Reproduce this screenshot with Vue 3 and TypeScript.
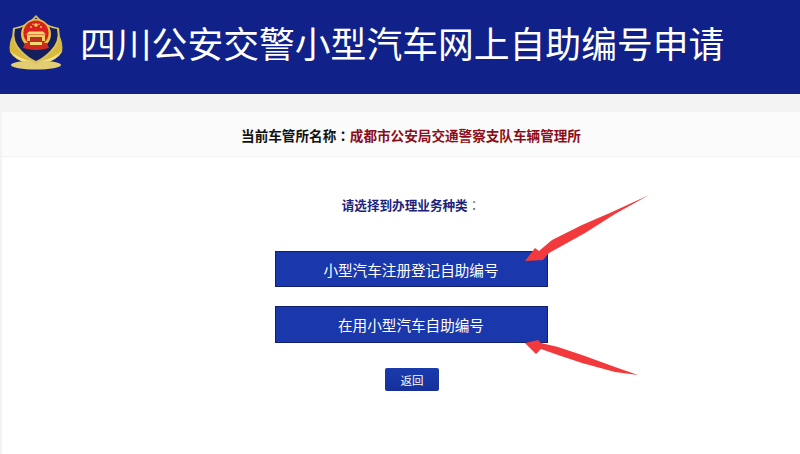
<script setup lang="ts">
const services: string[] = ['小型汽车注册登记自助编号', '在用小型汽车自助编号']
</script>

<template>
  <div class="page">
    <header class="banner">
      <svg class="emblem" viewBox="9 15 56 56" aria-hidden="true">
        <path d="M15 31 Q8 42 10 52 Q14 60 30 64 L36 66 L42 64 Q58 60 62 52 Q64 42 57 31 Q56 48 36 60 Q16 48 15 31Z" fill="#d9b93c"/>
        <path d="M10 51 Q18 58 31 61 L27 63 Q15 60 10 51Z M62 51 Q54 58 41 61 L45 63 Q57 60 62 51Z" fill="#f1e08a"/>
        <ellipse cx="36" cy="65" rx="25" ry="4.6" fill="#e3cd72"/>
        <path d="M13 28 Q27 26 36 15 Q45 26 59 28 Q62 42 52 52 Q44 60 36 64 Q28 60 20 52 Q10 42 13 28Z" fill="#d9c060"/>
        <path d="M15 29 Q28 27 36 17.5 Q44 27 57 29 Q60 41 50 51 Q43 58 36 61 Q29 58 22 51 Q12 41 15 29Z" fill="#141f5c"/>
        <circle cx="36" cy="34" r="15" fill="#e6c24a"/>
        <circle cx="36" cy="33" r="12.6" fill="#d8211f"/>
        <path d="M27 35 H45 V41 H27Z" fill="#efcf62"/>
        <path d="M26 34.5 H46 L43 31.5 H29Z" fill="#f3d971"/>
        <path d="M30 37 H42 V41 H30Z" fill="#b9301f"/>
        <path d="M25 43 H47 L49 48 Q36 52 23 48Z" fill="#cf2a22"/>
        <path d="M30 42 H42 V45 H30Z" fill="#f3d971"/>
        <circle cx="36" cy="25" r="1.8" fill="#f5d95b"/>
        <circle cx="31" cy="27" r="0.9" fill="#f5d95b"/>
        <circle cx="41" cy="27" r="0.9" fill="#f5d95b"/>
        <circle cx="33" cy="24.3" r="0.7" fill="#f5d95b"/>
        <circle cx="39" cy="24.3" r="0.7" fill="#f5d95b"/>
      </svg>
      <h1 class="title">四川公安交警小型汽车网上自助编号申请</h1>
    </header>
    <main class="panel">
      <div class="station"><b>当前车管所名称<span class="colon">：</span></b><b class="name">成都市公安局交通警察支队车辆管理所</b></div>
      <p class="prompt">请选择到办理业务种类<span class="colon light">：</span></p>
      <div class="actions">
        <button v-for="s in services" :key="s" class="service" type="button">{{ s }}</button>
        <button class="back" type="button">返回</button>
      </div>
      <svg class="arrows" viewBox="0 0 800 454" aria-hidden="true">
        <path d="M649 195 L612 212 L582 225 L552 240 L539 251 L535 248 L525 261 L543 260 L549 253 L558 248 L585 233 L615 214Z" fill="#f23a3d"/>
        <path d="M525 343 L538 340 L541 343 L558 347 L582 355 L615 367 L638 375 L615 372 L582 363 L558 355 L541 349 L536 354Z" fill="#f23a3d"/>
      </svg>
    </main>
  </div>
</template>

<style scoped>
.page {
  position: relative;
  width: 800px;
  height: 454px;
  overflow: hidden;
  background: #f3f3f3;
  font-family: "Liberation Sans", "Noto Sans CJK SC", sans-serif;
}
.banner {
  height: 94px;
  box-sizing: border-box;
  padding: 15px 0 0 9px;
  display: flex;
  align-items: flex-start;
  background: #10218a;
}
.emblem {
  width: 56px;
  height: 56px;
  flex: none;
}
.title {
  margin: 12px 0 0 15px;
  font-size: 35.8px;
  line-height: 38px;
  font-weight: 400;
  color: #fff;
  white-space: nowrap;
}
.panel {
  margin: 18px 0 0 2px;
  height: 342px;
  padding-left: 20px;
  background: #fff;
}
.station {
  height: 45px;
  margin-left: -20px;
  padding-left: 20px;
  box-sizing: border-box;
  border-bottom: 1px solid #f1f1f1;
  background: #fbfbfb;
  font-size: 13.6px;
  line-height: 47px;
  text-align: center;
  color: #111;
}
.name { color: #8c0d18; }
.colon { font-family: "Noto Sans CJK TC", sans-serif; }
.light { font-weight: 400; color: #555; }
.prompt {
  margin: 38px 0 0;
  height: 20px;
  font-size: 12.6px;
  line-height: 20px;
  font-weight: 700;
  text-align: center;
  color: #1c2378;
}
.actions {
  margin-top: 36px;
  display: flex;
  flex-direction: column;
  align-items: center;
}
button {
  font-family: inherit;
  color: #fff;
  padding: 0;
  cursor: pointer;
}
.service {
  width: 273px;
  height: 36px;
  margin-bottom: 19px;
  border: 1px solid #10206f;
  background: #1a37ab;
  font-size: 14.6px;
}
.service:nth-child(2) { height: 37px; margin-bottom: 0; }
.back {
  width: 54px;
  height: 23px;
  margin: 25px 0 0 2px;
  border: 0;
  border-radius: 2px;
  background: linear-gradient(#1a3bad, #16309a);
  font-size: 11.5px;
}
.arrows {
  position: absolute;
  inset: 0;
  width: 800px;
  height: 454px;
  pointer-events: none;
}
</style>
